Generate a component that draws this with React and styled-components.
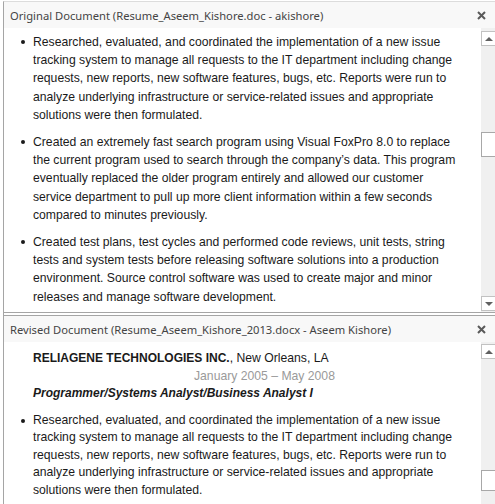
import React from 'react'
import styled, { createGlobalStyle } from 'styled-components'

const Global = createGlobalStyle`
  html, body {
    margin: 0;
    padding: 0;
    background: #fff;
    overflow: hidden;
  }
`

const Frame = styled.div`
  width: 494px;
  height: 504px;
  margin-left: 3px;
  border-left: 1px solid #a5a5a5;
  border-top: 1px solid #dcdcdc;
  margin-top: 1px;
  display: flex;
  flex-direction: column;
  overflow: hidden;
`

const Pane = styled.section`
  height: ${p => p.h}px;
  display: flex;
  flex-direction: column;
  flex-shrink: 0;
`

const Header = styled.div`
  height: ${p => p.h}px;
  flex-shrink: 0;
  display: flex;
  align-items: center;
  justify-content: space-between;
  padding: 0 12px 0 6px;
  background: #f8f8f8;
  font-family: "Noto Sans", "Segoe UI", sans-serif;
  font-size: 11.2px;
  color: #444;
`

const Close = styled.svg`
  width: 9px;
  height: 9px;
`

const Body = styled.div`
  flex: 1;
  display: flex;
  min-height: 0;
  background: #fff;
`

const Doc = styled.div`
  flex: 1;
  padding-top: ${p => p.pt}px;
  font-family: "Liberation Sans", Arial, sans-serif;
  font-size: 12.2px;
  line-height: ${p => p.lh}px;
  color: #1a1a1a;
  overflow: hidden;
`

const Item = styled.div`
  display: flex;
  margin-bottom: 9px;
`

const Bullet = styled.span`
  width: 29px;
  flex-shrink: 0;
  position: relative;
  &::before {
    content: '';
    position: absolute;
    left: 17px;
    top: 7px;
    width: 4px;
    height: 4px;
    border-radius: 50%;
    background: #1a1a1a;
  }
`

const Lines = styled.div`
  display: flex;
  flex-direction: column;
  white-space: nowrap;
`

const Company = styled.div`
  padding-left: 29px;
  white-space: nowrap;
  b {
    font-weight: 700;
    font-size: 12px;
  }
`

const Dates = styled.div`
  padding-left: 190px;
  color: #9a9a9a;
  white-space: nowrap;
`

const Role = styled.div`
  padding-left: 29px;
  font-size: 12px;
  font-weight: 700;
  font-style: italic;
  margin-bottom: 9px;
`

const Track = styled.div`
  width: 17px;
  flex-shrink: 0;
  background: #f0f0f0;
  display: flex;
  flex-direction: column;
  padding-top: ${p => p.pt}px;
  padding-bottom: ${p => p.pb}px;
  box-sizing: border-box;
`

const Arrow = styled.div`
  height: 15px;
  flex-shrink: 0;
  box-sizing: border-box;
  border: 1px solid #c2c2c2;
  background: #fff;
  display: flex;
  align-items: center;
  justify-content: center;
  &::before {
    content: '';
    border-left: 4px solid transparent;
    border-right: 4px solid transparent;
    ${p => (p.down ? 'border-top: 4px solid #606060;' : 'border-bottom: 4px solid #606060;')}
    margin-right: 2px;
  }
`

const Gap = styled.div`
  height: ${p => p.h}px;
  flex-shrink: 0;
`

const Thumb = styled.div`
  height: ${p => p.h}px;
  flex-shrink: 0;
  box-sizing: border-box;
  border: 1px solid #a8a8a8;
  background: #fff;
`

const Spacer = styled.div`
  flex: 1;
`

const Divider = styled.div`
  height: 2px;
  flex-shrink: 0;
  margin-left: -4px;
  border-top: 1px solid #a5a5a5;
  border-bottom: 1px solid #a5a5a5;
`

const X = () => (
  <Close viewBox="0 0 9 9">
    <path d="M1 1L8 8M8 1L1 8" stroke="#5a5a5a" strokeWidth="2" />
  </Close>
)

const para1 = [
  'Researched, evaluated, and coordinated the implementation of a new issue',
  'tracking system to manage all requests to the IT department including change',
  'requests, new reports, new software features, bugs, etc. Reports were run to',
  'analyze underlying infrastructure or service-related issues and appropriate',
  'solutions were then formulated.',
]

const para2 = [
  'Created an extremely fast search program using Visual FoxPro 8.0 to replace',
  'the current program used to search through the company\u2019s data. This program',
  'eventually replaced the older program entirely and allowed our customer',
  'service department to pull up more client information within a few seconds',
  'compared to minutes previously.',
]

const para3 = [
  'Created test plans, test cycles and performed code reviews, unit tests, string',
  'tests and system tests before releasing software solutions into a production',
  'environment. Source control software was used to create major and minor',
  'releases and manage software development.',
]

const Para = ({ lines }) => (
  <Item>
    <Bullet />
    <Lines>
      {lines.map(l => (
        <span key={l}>{l}</span>
      ))}
    </Lines>
  </Item>
)

export default function App() {
  return (
    <>
      <Global />
      <Frame>
        <Pane h={310}>
          <Header h={26}>
            <span>Original Document (Resume_Aseem_Kishore.doc - akishore)</span>
            <X />
          </Header>
          <Body>
            <Doc pt={5} lh={18.2}>
              <Para lines={para1} />
              <Para lines={para2} />
              <Para lines={para3} />
            </Doc>
            <Track pt={3} pb={1}>
              <Arrow />
              <Gap h={86} />
              <Thumb h={25} />
              <Spacer />
              <Arrow down />
            </Track>
          </Body>
        </Pane>
        <Divider />
        <Pane h={190}>
          <Header h={26}>
            <span>Revised Document (Resume_Aseem_Kishore_2013.docx - Aseem Kishore)</span>
            <X />
          </Header>
          <Body>
            <Doc pt={8} lh={17.5}>
              <Company>
                <b>RELIAGENE TECHNOLOGIES INC.</b>, New Orleans, LA
              </Company>
              <Dates>January 2005 &ndash; May 2008</Dates>
              <Role>Programmer/Systems Analyst/Business Analyst I</Role>
              <Para lines={para1} />
            </Doc>
            <Track pt={2} pb={0}>
              <Arrow />
              <Gap h={111} />
              <Thumb h={21} />
              <Spacer />
            </Track>
          </Body>
        </Pane>
      </Frame>
    </>
  )
}
